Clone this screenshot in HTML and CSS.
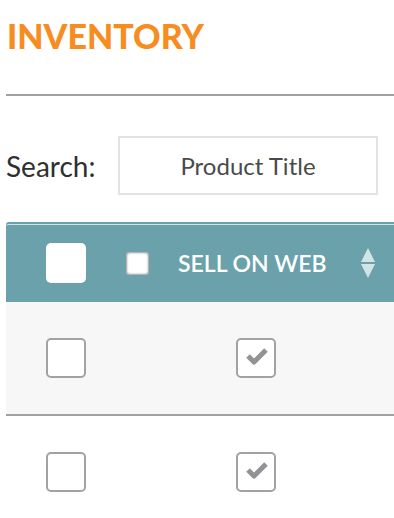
FILE: index.html
```html
<!DOCTYPE html>
<html lang="en">
<head>
  <meta charset="UTF-8" />
  <title>Inventory</title>
  <meta name="viewport" content="width=device-width, initial-scale=1" />
  <link rel="stylesheet" href="styles.css">
</head>
<body>
  <header class="page-head">
    <h1>INVENTORY</h1>
  </header>

  <div class="search">
    <label for="search">Search:</label>
    <input type="text" id="search" placeholder="Product Title" />
  </div>

  <div class="grid">
    <div class="grid-head">
      <div class="col-select">
        <span class="box box-head"></span>
      </div>
      <div class="col-web">
        <span class="mini-box"></span>
        <span class="head-label">SELL ON WEB</span>
        <span class="sort">
          <svg width="16" height="32" viewBox="0 0 16 32">
            <path d="M8 1 L15 15 L1 15 Z" fill="#d3e4e7"/>
            <path d="M1 17 L15 17 L8 31 Z" fill="#d3e4e7"/>
          </svg>
        </span>
      </div>
    </div>

    <div class="grid-row shaded">
      <div class="col-select"><span class="box"></span></div>
      <div class="col-web"><span class="box checked">
        <svg width="36" height="36" viewBox="0 0 36 36"><path d="M10 16 L16 22 L28 10" fill="none" stroke="#939397" stroke-width="5" stroke-linejoin="round"/></svg>
      </span></div>
    </div>

    <div class="grid-row">
      <div class="col-select"><span class="box"></span></div>
      <div class="col-web"><span class="box checked">
        <svg width="36" height="36" viewBox="0 0 36 36"><path d="M10 16 L16 22 L28 10" fill="none" stroke="#939397" stroke-width="5" stroke-linejoin="round"/></svg>
      </span></div>
    </div>
  </div>
</body>
</html>
```

FILE: styles.css
```css
:root {
  --orange: #f78c1f;
  --teal: #6aa1ab;
  --line: #a2a2a6;
  --text: #333;
}
body {
  margin: 0;
  padding: 0 0 0 6px;
  font-family: Lato, "Open Sans", sans-serif;
  color: var(--text);
  background: #fff;
  overflow: hidden;
}
.page-head {
  padding: 16px 0 0 1px;
  height: 78px;
  border-bottom: 2px solid var(--line);
}
.page-head h1 {
  margin: 0;
  font-size: 34px;
  line-height: 40px;
  font-weight: 900;
  color: var(--orange);
}
.search {
  display: flex;
  align-items: center;
  margin-top: 40px;
}
.search label {
  font-size: 28px;
  width: 112px;
  color: #2f2f2f;
}
.search input {
  box-sizing: border-box;
  width: 260px;
  height: 59px;
  border: 2px solid #e2e2e2;
  text-align: center;
  font-family: inherit;
  font-size: 24px;
  outline: none;
}
.search input::placeholder {
  color: #4a4a4a;
}
.grid {
  margin-top: 27px;
  width: 420px;
}
.grid-head {
  box-sizing: border-box;
  display: flex;
  align-items: center;
  height: 80px;
  background: var(--teal);
  border-top: 2px solid var(--teal);
  box-shadow: inset 0 1px 0 #d4e2e5;
  border-radius: 3px 0 0 0;
}
.grid-row {
  display: flex;
  align-items: center;
  height: 112px;
}
.grid-row.shaded {
  background: #f7f7f7;
  border-bottom: 2px solid var(--line);
}
.col-select {
  display: flex;
  width: 80px;
  padding-left: 40px;
}
.col-web {
  display: flex;
  align-items: center;
}
.grid-row .col-web {
  padding-left: 110px;
}
.box {
  box-sizing: border-box;
  display: flex;
  align-items: center;
  justify-content: center;
  width: 40px;
  height: 40px;
  border: 2px solid var(--line);
  border-radius: 5px;
  background: #fff;
}
.box-head {
  border: none;
}
.mini-box {
  box-sizing: border-box;
  width: 23px;
  height: 23px;
  border-radius: 4px;
  background: #fff;
  box-shadow: inset 0 0 2px 1px #9a9a9a;
}
.head-label {
  margin-left: 29px;
  color: #fff;
  font-size: 23px;
  font-weight: 600;
}
.sort {
  margin-left: 33px;
  display: flex;
}
```
